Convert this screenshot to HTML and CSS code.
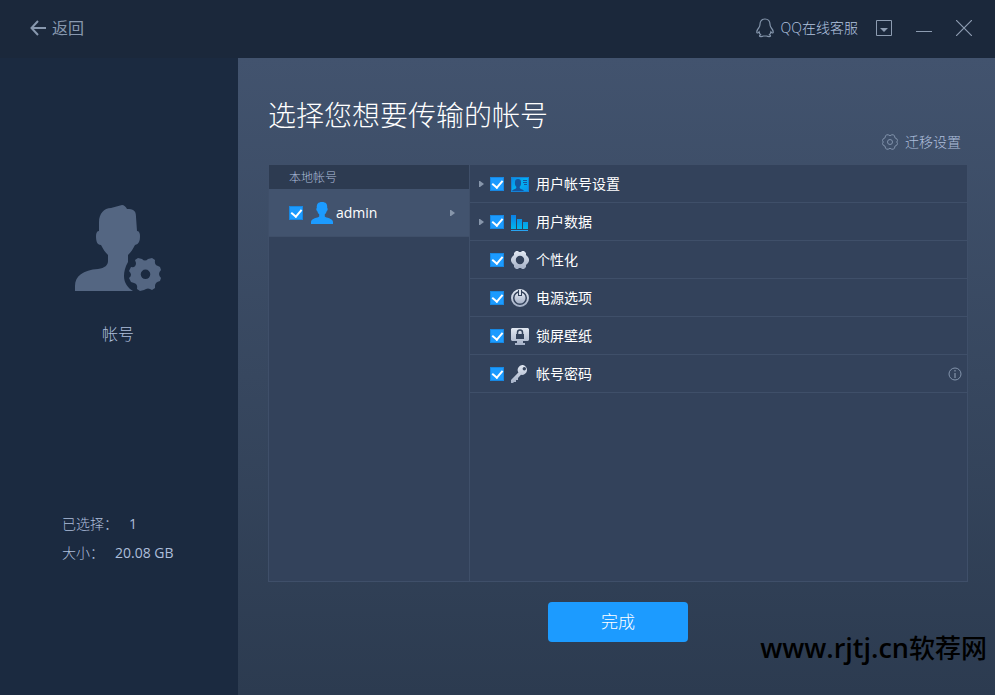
FILE: index.html
```html
<!DOCTYPE html>
<html lang="zh-CN">
<head>
<meta charset="utf-8">
<meta name="viewport" content="width=device-width, initial-scale=1">
<title>选择您想要传输的帐号</title>
<link rel="stylesheet" href="styles.css">
</head>
<body>
<svg class="defs" aria-hidden="true">
  <defs>
    <linearGradient id="silver" x1="0" y1="0" x2="0" y2="1"><stop offset="0" stop-color="#e1e7f1"/><stop offset="1" stop-color="#a5b1c7"/></linearGradient>
    <linearGradient id="cyan" x1="0" y1="0" x2="0" y2="1"><stop offset="0" stop-color="#0c7fe6"/><stop offset="1" stop-color="#00b8ec"/></linearGradient>
    <linearGradient id="card" x1="0" y1="0" x2="1" y2="1"><stop offset="0" stop-color="#0c86e4"/><stop offset=".5" stop-color="#02b0f2"/><stop offset="1" stop-color="#0a90e8"/></linearGradient>
  </defs>
</svg>

<header class="topbar">
  <button class="back" type="button">
    <svg width="16" height="16" viewBox="0 0 16 16" fill="none" stroke="currentColor" stroke-width="2"><path d="M8 1 1.500 8 8 15M1.500 8H16"/></svg>
    <span>返回</span>
  </button>
  <div class="tools">
    <a class="support" href="#">
      <svg width="18" height="20" viewBox="0 0 18 20" fill="none" stroke="#8495ab" stroke-width="1.200"><path d="M9 1C6 1 4 3.300 4 6.300c0 1.300-.3 2.200-1 3.200-1.600 1.900-2.400 3.400-2.200 4.900.1.700.9.800 1.500.2l.8-.8c.2 1.200.8 2.200 1.600 3-.9.300-1.300.8-1.200 1.200.2.800 2.600.7 4 0h3c1.400.7 3.800.8 4 0 .1-.4-.3-.9-1.200-1.200.8-.8 1.400-1.800 1.600-3l.8.8c.6.600 1.400.5 1.500-.2.200-1.500-.6-3-2.200-4.900-.7-1-1-1.900-1-3.200C14 3.300 12 1 9 1Z"/></svg>
      <span>QQ在线客服</span>
    </a>
    <button class="tool" type="button" aria-label="菜单"><svg width="16" height="16" viewBox="0 0 16 16"><path d="M.5.5h15v15H.5z" fill="none" stroke="#8d9cb1"/><path d="M4 8h8l-4 4z" fill="#8d9cb1"/></svg></button>
    <button class="tool" type="button" aria-label="最小化"><svg width="16" height="16" viewBox="0 0 16 16"><path d="M0 11.500h16" stroke="#8d9cb1"/></svg></button>
    <button class="tool" type="button" aria-label="关闭"><svg width="16" height="16" viewBox="0 0 16 16"><path d="m0 0 16 16M16 0 0 16" stroke="#8d9cb1" stroke-width="1.200"/></svg></button>
  </div>
</header>

<div class="body">
  <aside class="sidebar">
    <div class="profile">
      <svg width="88" height="88" viewBox="0 0 88 88" fill="#546682">
        <path d="M1 87V82C1 72 9 66 24 65c7-1 10-4 10-8v-6c-3-3-5-6-7-10-4 0-5-4-5-9 0-3 1-5 3-5V18C25 10 30 4 37 4L48 1c2 0 4 2 5 4 6 0 9 1 9 8l1 14c2 0 3 2 3 5 0 5-1 8-5 9-2 4-4 7-7 10v7c-3 5-4 10-4 14 0 7 4 12 9 15Z"/>
        <path fill-rule="evenodd" d="m64 54 4 1q3 3 6 0l4-1 3 2q-1 5 3 6l2 1 1 3q-4 4 0 8l-1 3q-5 1-5 5v2l-3 2q-4-3-8 0l-4 1-3-2q1-5-3-6l-3-1-2-4q4-3 0-7l2-4q5 1 5-4l-1-3ZM71.500 65.500a4.800 4.800 0 1 0 0 9.600 4.800 4.800 0 0 0 0-9.600Z"/>
      </svg>
      <h2>帐号</h2>
    </div>
    <dl class="summary">
      <div><dt>已选择：</dt><dd>1</dd></div>
      <div><dt>大小：</dt><dd>20.08 GB</dd></div>
    </dl>
  </aside>

  <main class="content">
    <h1>选择您想要传输的帐号</h1>
    <a class="settings" href="#">
      <svg width="16" height="16" viewBox="0 0 16 16" fill="none" stroke="#8192ab"><path d="M4.500.8h1.700Q8 2.600 9.800.8h1.700l1 1.200q0 2.500 2.300 2.800l.7 1.700q-1.500 1.500 0 3l-.7 1.700q-2.300.3-2.300 2.800l-1 1.200H9.800Q8 13.400 6.200 15.200H4.500L3.500 14q0-2.500-2.300-2.800L.5 9.500q1.500-1.500 0-3l.7-1.700Q3.500 4.500 3.500 2Z"/><circle cx="8" cy="8" r="2.500"/></svg>
      <span>迁移设置</span>
    </a>

    <div class="panel">
      <section class="accounts">
        <h3>本地帐号</h3>
        <div class="account">
          <label>
            <input type="checkbox" checked>
            <svg width="22" height="22" viewBox="0 0 22 22" fill="#1c9bff"><path d="M11 0c4 0 5.500 2 5.200 6 .8.500.6 2.500-.4 3-.5 1.700-1 2.500-2 3.300v2.200c1 1.500 8.200 1.500 8.200 5.500v2H0v-2c0-4 7.200-4 8.200-5.500v-2.200c-1-.8-1.500-1.600-2-3.300-1-.5-1.200-2.500-.4-3C5.500 2 7 0 11 0Z"/></svg>
            <span>admin</span>
          </label>
          <svg class="arrow" width="5" height="6" viewBox="0 0 5 6"><path d="M0 0h1l4 3-4 3H0z" fill="#8796ab"/></svg>
        </div>
      </section>

      <ul class="items">
        <li>
          <svg class="arrow" width="5" height="6" viewBox="0 0 5 6"><path d="M0 0h1l4 3-4 3H0z" fill="#8796ab"/></svg>
          <label>
            <input type="checkbox" checked>
            <svg width="18" height="18" viewBox="0 0 18 18"><path d="M0 2h18v15H0z" fill="url(#card)"/><path d="M1 16.500c0-2 3-2 4.300-3.500v-1.200C4 10.500 3.800 9 4 7c0-2 1-3 3-3s3 1 3 3c.2 2 0 3.500-1.300 4.800V13c1.300 1.500 4.300 1.500 4.300 3.500Z" fill="#17559d"/><path d="M12 5.500h4M12 7.500h4M13 9.500h3" stroke="#17559d"/><path d="M.5 2.500h17v14H.5z" fill="none" stroke="#1482d8"/></svg>
            <span>用户帐号设置</span>
          </label>
        </li>
        <li>
          <svg class="arrow" width="5" height="6" viewBox="0 0 5 6"><path d="M0 0h1l4 3-4 3H0z" fill="#8796ab"/></svg>
          <label>
            <input type="checkbox" checked>
            <svg width="18" height="18" viewBox="0 0 18 18"><path d="M0 2h5v14H0zM6 6h5v10H6zM12 9h5v7h-5z" fill="url(#cyan)"/><path d="M0 17.500h17" stroke="#29a4f2"/></svg>
            <span>用户数据</span>
          </label>
        </li>
        <li>
          <i class="arrow"></i>
          <label>
            <input type="checkbox" checked>
            <svg width="18" height="18" viewBox="0 0 18 18"><path fill="url(#silver)" fill-rule="evenodd" d="M5 0h2l1 1h2l1-1h2l2 2v2l1 1 1 1 1 2v2l-1 2-1 1-1 1v2l-2 2h-2l-1-1H8l-1 1H5l-2-2v-2l-1-1-1-1-1-2V8l1-2 1-1 1-1V2ZM9 4.800a4.200 4.200 0 1 0 0 8.400 4.200 4.200 0 0 0 0-8.400Z"/></svg>
            <span>个性化</span>
          </label>
        </li>
        <li>
          <i class="arrow"></i>
          <label>
            <input type="checkbox" checked>
            <svg width="18" height="18" viewBox="0 0 18 18"><circle cx="9" cy="9" r="8" fill="none" stroke="url(#silver)" stroke-width="2"/><circle cx="9" cy="9" r="5.500" fill="url(#silver)"/><path d="M7 1h4v6H7z" fill="#33425b"/><path d="M8 1h2v5H8z" fill="#dbe2ed"/></svg>
            <span>电源选项</span>
          </label>
        </li>
        <li>
          <i class="arrow"></i>
          <label>
            <input type="checkbox" checked>
            <svg width="18" height="18" viewBox="0 0 18 18"><path d="M1 1h16l1 1v11l-1 1h-5v2h2v2H4v-2h2v-2H1l-1-1V2Z" fill="url(#silver)"/><path d="M5 7h8v5H5z" fill="#33425b"/><path d="M6.500 7V5.500a2.500 2.500 0 0 1 5 0V7" fill="none" stroke="#33425b" stroke-width="1.500"/></svg>
            <span>锁屏壁纸</span>
          </label>
        </li>
        <li>
          <i class="arrow"></i>
          <label>
            <input type="checkbox" checked>
            <svg width="18" height="18" viewBox="0 0 18 18"><path fill="url(#silver)" fill-rule="evenodd" d="M12 0a5 5 0 1 1-2 9.800L7 13v2H5v2H3l-1 1H0v-3l7.400-7.400A5 5 0 0 1 12 0Zm1.300 2a1.700 1.700 0 1 0 0 3.400 1.700 1.700 0 0 0 0-3.400Z"/></svg>
            <span>帐号密码</span>
          </label>
          <svg class="info" role="img" aria-label="说明" width="14" height="14" viewBox="0 0 14 14"><circle cx="7" cy="7" r="6" fill="none" stroke="#8293ab"/><path d="M7 6v5M7 3v1.500" stroke="#94a3b9"/></svg>
        </li>
      </ul>
    </div>

    <button class="done" type="button">完成</button>
  </main>
</div>
<div class="watermark"><b>www.rjtj.cn</b>软荐网</div>
</body>
</html>
```
FILE: styles.css
```css
* {
  box-sizing: border-box;
}

body {
  position: relative;
  display: flex;
  flex-direction: column;
  min-height: 100vh;
  margin: 0;
  background: #1b283b;
  color: #fff;
  font: 300 14px/20px "Open Sans", "Noto Sans CJK SC", sans-serif;
}

h1, h2, h3, dl, dd, ul {
  margin: 0;
  padding: 0;
  font-weight: 300;
}

button {
  padding: 0;
  border: 0;
  background: none;
  color: inherit;
  font: inherit;
}

a {
  color: inherit;
  text-decoration: none;
}

svg {
  display: block;
  flex: none;
}

.defs {
  position: absolute;
  width: 0;
  height: 0;
}

.topbar {
  display: flex;
  align-items: center;
  justify-content: space-between;
  height: 58px;
  padding: 0 23px 2px 30px;
}

.back {
  display: flex;
  align-items: center;
  gap: 6px;
  color: #8898ae;
  font-size: 16px;
  font-weight: 400;
}

.tools {
  display: flex;
  align-items: center;
  gap: 24px;
}

.support {
  display: flex;
  align-items: center;
  gap: 7px;
  margin-right: -6px;
  color: #b4c5e0;
}

.body {
  display: flex;
  flex: 1;
}

.sidebar {
  display: flex;
  flex-direction: column;
  justify-content: space-between;
  flex: none;
  width: 238px;
  padding: 146px 2px 132px 0;
  background: #1b2a40;
  color: #adbedb;
}

.profile {
  display: flex;
  flex-direction: column;
  align-items: center;
  gap: 30px;
}

.profile h2 {
  font-size: 16px;
  line-height: 24px;
}

.summary {
  display: grid;
  gap: 9px;
  padding-left: 62px;
}

.summary div {
  display: flex;
  gap: 11px;
}

.summary dd {
  font-weight: 400;
}

.content {
  display: flex;
  flex: 1;
  flex-direction: column;
  min-width: 0;
  padding: 37px 27px 53px 30px;
  background: linear-gradient(#42536e, #2c3b50);
}

h1 {
  font-size: 28px;
  line-height: 40px;
}

.settings {
  display: flex;
  align-items: center;
  align-self: flex-end;
  gap: 7px;
  margin: -3px 7px 0 0;
  color: #adbedb;
}

.panel {
  display: flex;
  flex: 1;
  margin: 12px 0 20px;
  border: 1px solid #3f4f69;
  background: #33425b;
}

.accounts {
  flex: none;
  width: 201px;
  border-right: 1px solid #3f4f69;
}

.accounts h3 {
  padding: 3px 20px 1px;
  background: #2d3b51;
  color: #adbedb;
  font-size: 12px;
}

.account {
  display: flex;
  align-items: center;
  justify-content: space-between;
  height: 48px;
  padding: 0 14px 0 20px;
  border-bottom: 1px solid #3f4f69;
  background: #42536e;
}

.account label {
  display: flex;
  align-items: center;
  gap: 3px;
  font-weight: 400;
}

input[type="checkbox"] {
  display: grid;
  flex: none;
  place-items: center;
  width: 14px;
  height: 14px;
  margin: 0;
  border: 1px solid #1788e3;
  appearance: none;
  background: #1c9bff;
}

.account input[type="checkbox"] {
  margin-right: 5px;
}

input[type="checkbox"]:checked::after {
  width: 5px;
  height: 8px;
  margin-bottom: 2px;
  border: solid #fff;
  border-width: 0 2px 2px 0;
  content: "";
  transform: rotate(40deg);
}

.items {
  flex: 1;
  min-width: 0;
  list-style: none;
}

.items li {
  display: flex;
  align-items: center;
  gap: 6px;
  height: 38px;
  padding: 0 5px 0 9px;
  border-bottom: 1px solid #3f4f69;
}

.items label {
  display: flex;
  align-items: center;
  gap: 7px;
  font-weight: 400;
}

.items .arrow {
  width: 5px;
}

.info {
  margin-left: auto;
}

.done {
  align-self: center;
  width: 140px;
  height: 40px;
  border-radius: 4px;
  background: #1c9bff;
  font-size: 17px;
}

.watermark {
  position: absolute;
  right: 8px;
  bottom: 29px;
  color: #000;
  font: 500 26px/36px "Open Sans", "Noto Sans CJK SC", sans-serif;
}

.watermark b {
  font-size: 27px;
  font-weight: 600;
}
```
